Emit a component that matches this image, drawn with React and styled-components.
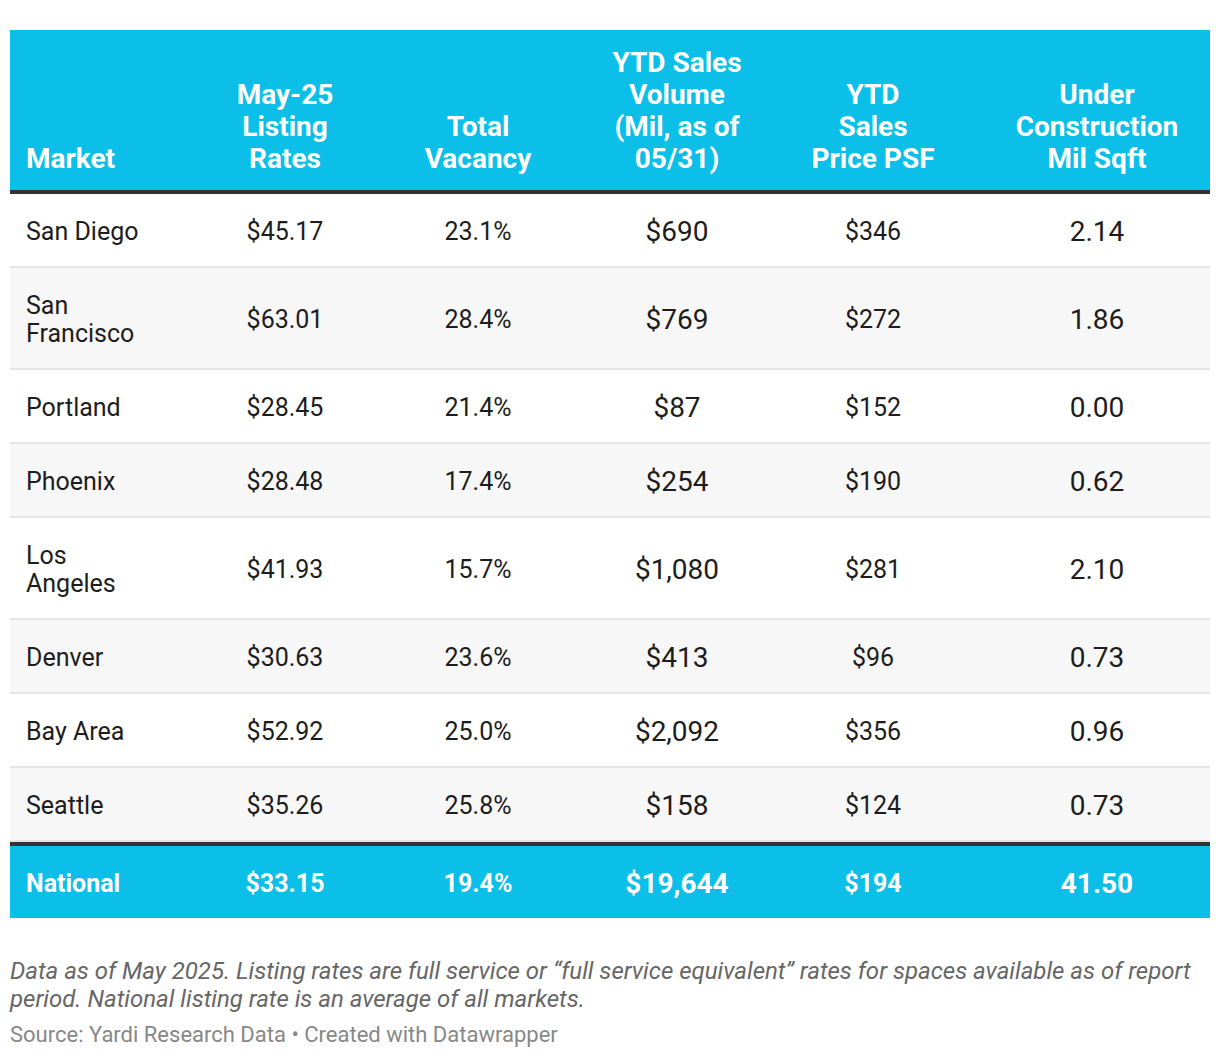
import styled, { createGlobalStyle } from "styled-components";

const GlobalStyle = createGlobalStyle`
  body {
    margin: 0;
    background: #fff;
    font-family: Roboto, "Liberation Sans", sans-serif;
  }
`;

const Page = styled.div`
  padding: 30px 10px 0 10px;
  color: #1d1d1d;
`;

const Table = styled.div`
  display: flex;
  flex-direction: column;
`;

const COLS = "180px 190px 196px 202px 190px 242px";

const HeadRow = styled.div`
  display: grid;
  grid-template-columns: ${COLS};
  background: #0bbfe8;
  border-bottom: 4px solid #333;
  color: #fff;
  font-weight: 700;
  font-size: 28px;
  line-height: 32px;
`;

const HeadCell = styled.div`
  display: flex;
  align-items: flex-end;
  justify-content: ${(p) => (p.$left ? "flex-start" : "center")};
  text-align: ${(p) => (p.$left ? "left" : "center")};
  padding: 17px 6px 15px;
  padding-left: ${(p) => (p.$left ? "16px" : p.$shift ? "22px" : "6px")};
`;

const Row = styled.div`
  display: grid;
  grid-template-columns: ${COLS};
  background: ${(p) => (p.$alt ? "#f7f7f7" : "#fff")};
  border-bottom: 2px solid #e6e6e6;
  font-size: 25px;
  line-height: 28px;
  &:last-child {
    border-bottom: none;
  }
`;

const Cell = styled.div`
  display: flex;
  align-items: center;
  justify-content: ${(p) => (p.$left ? "flex-start" : "center")};
  text-align: ${(p) => (p.$left ? "left" : "center")};
  padding: 24px 6px 20px;
  padding-left: ${(p) => (p.$left ? "16px" : p.$shift ? "22px" : "6px")};
  font-size: ${(p) => (p.$big ? "28px" : "inherit")};
`;

const TotalRow = styled.div`
  display: grid;
  grid-template-columns: ${COLS};
  background: #0bbfe8;
  border-top: 4px solid #333;
  color: #fff;
  font-weight: 700;
  font-size: 25px;
  line-height: 28px;
`;

const Notes = styled.div`
  padding-top: 39px;
  display: flex;
  flex-direction: column;
  gap: 9px;
`;

const Note = styled.p`
  margin: 0;
  font-style: italic;
  font-size: 24px;
  line-height: 28px;
  color: #666;
`;

const Source = styled.p`
  margin: 0;
  font-size: 22px;
  line-height: 26px;
  color: #888;
`;

const headers = [
  ["Market"],
  ["May-25", "Listing", "Rates"],
  ["Total", "Vacancy"],
  ["YTD Sales", "Volume", "(Mil, as of", "05/31)"],
  ["YTD", "Sales", "Price PSF"],
  ["Under", "Construction", "Mil Sqft"],
];

const rows = [
  ["San Diego", "$45.17", "23.1%", "$690", "$346", "2.14"],
  ["San Francisco", "$63.01", "28.4%", "$769", "$272", "1.86"],
  ["Portland", "$28.45", "21.4%", "$87", "$152", "0.00"],
  ["Phoenix", "$28.48", "17.4%", "$254", "$190", "0.62"],
  ["Los Angeles", "$41.93", "15.7%", "$1,080", "$281", "2.10"],
  ["Denver", "$30.63", "23.6%", "$413", "$96", "0.73"],
  ["Bay Area", "$52.92", "25.0%", "$2,092", "$356", "0.96"],
  ["Seattle", "$35.26", "25.8%", "$158", "$124", "0.73"],
];

const total = ["National", "$33.15", "19.4%", "$19,644", "$194", "41.50"];

// markets that wrap onto two lines in the narrow first column
const wrapped = ["San Francisco", "Los Angeles"];

export default function App() {
  return (
    <Page>
      <GlobalStyle />
      <Table>
        <HeadRow>
          {headers.map((lines, i) => (
            <HeadCell key={i} $left={i === 0} $shift={i === 5}>
              <div>
                {lines.map((l, j) => (
                  <div key={j}>{l}</div>
                ))}
              </div>
            </HeadCell>
          ))}
        </HeadRow>
        {rows.map((r, i) => (
          <Row key={r[0]} $alt={i % 2 === 1}>
            {r.map((v, j) => (
              <Cell
                key={j}
                $left={j === 0}
                $shift={j === 5}
                $big={j === 3 || j === 5}
              >
                {j === 0 && wrapped.includes(v) ? (
                  <div>
                    {v.split(" ").map((w) => (
                      <div key={w}>{w}</div>
                    ))}
                  </div>
                ) : (
                  v
                )}
              </Cell>
            ))}
          </Row>
        ))}
        <TotalRow>
          {total.map((v, j) => (
            <Cell key={j} $left={j === 0} $shift={j === 5} $big={j === 3 || j === 5}>
              {v}
            </Cell>
          ))}
        </TotalRow>
      </Table>
      <Notes>
        <Note>
          Data as of May 2025. Listing rates are full service or “full service
          equivalent” rates for spaces available as of report period. National
          listing rate is an average of all markets.
        </Note>
        <Source>Source: Yardi Research Data • Created with Datawrapper</Source>
      </Notes>
    </Page>
  );
}
